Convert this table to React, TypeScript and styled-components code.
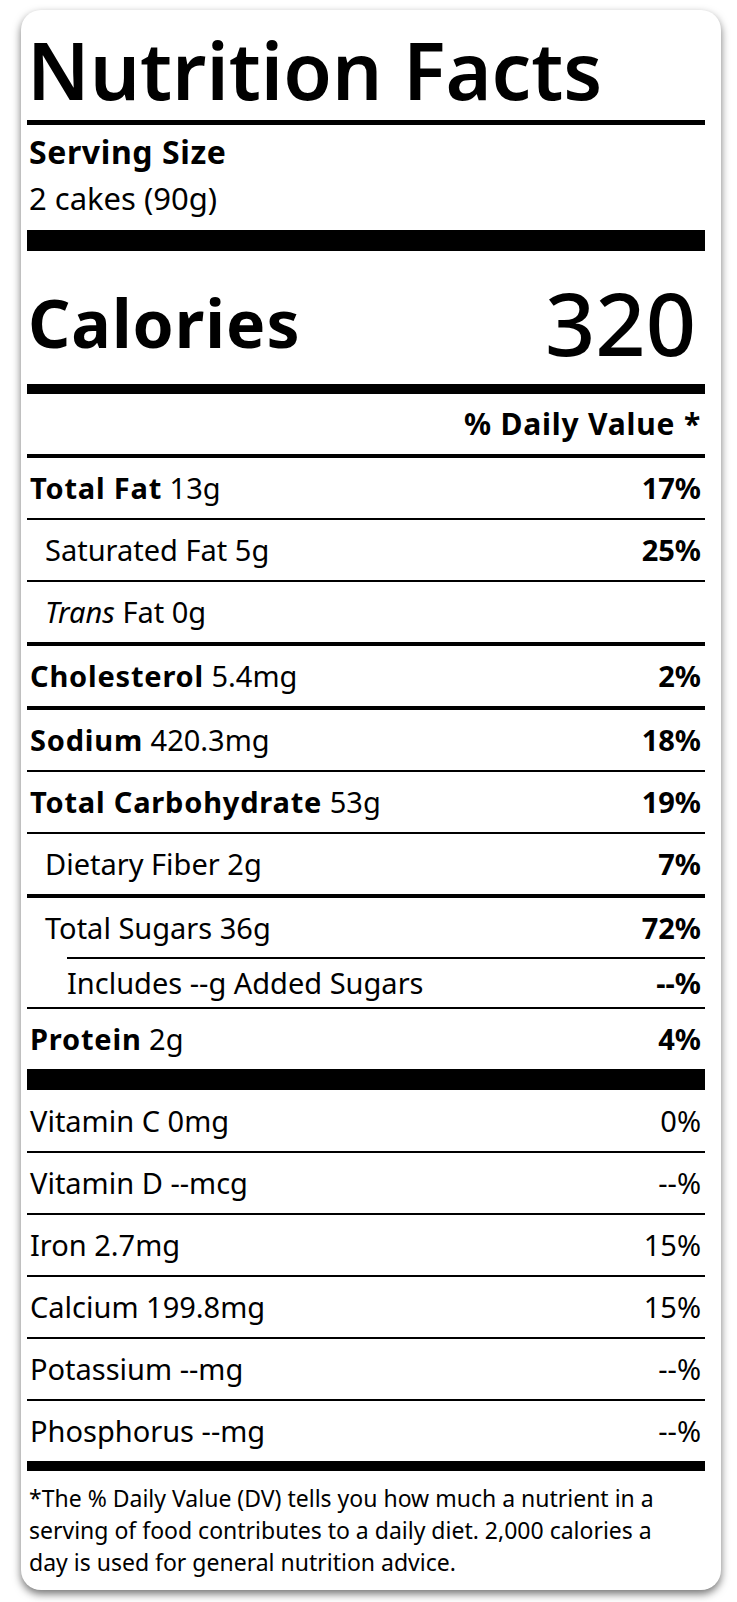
import React from 'react'
import styled, { createGlobalStyle } from 'styled-components'

const GlobalStyle = createGlobalStyle`
  html, body {
    margin: 0;
    padding: 0;
    background: #fff;
  }
  body {
    font-family: 'Noto Sans', 'Open Sans', sans-serif;
    color: #000;
  }
`

const Page = styled.div`
  padding: 10px 16px 12px 21px;
`

const Label = styled.section`
  width: 700px;
  box-sizing: border-box;
  padding: 0 16px 0 6px;
  background: #fff;
  border-radius: 20px;
  box-shadow: 0 4px 9px rgba(0, 0, 0, 0.55);
`

const Title = styled.h1`
  margin: 0;
  padding-top: 10px;
  font-size: 79px;
  line-height: 100px;
  font-weight: 600;
  white-space: nowrap;
`

const Rule = styled.div<{ $h: number; $inset?: number }>`
  height: ${({ $h }) => $h}px;
  margin-left: ${({ $inset }) => $inset || 0}px;
  background: #000;
`

const Serving = styled.div`
  padding: 4px 0 9px 2px;
  line-height: 46px;
`

const ServingTitle = styled.div`
  font-size: 32px;
  font-weight: 700;
  letter-spacing: 0.6px;
`

const ServingValue = styled.div`
  font-size: 31px;
`

const CaloriesRow = styled.div`
  display: flex;
  justify-content: space-between;
  align-items: center;
  height: 133px;
  box-sizing: border-box;
  padding: 8px 9px 0 1px;
`

const CaloriesLabel = styled.span`
  font-size: 66px;
  font-weight: 700;
  letter-spacing: 1px;
  line-height: 1;
`

const CaloriesValue = styled.span`
  font-size: 88px;
  font-weight: 500;
  line-height: 1;
`

const DailyHead = styled.div`
  text-align: right;
  padding-right: 4px;
  font-size: 30px;
  font-weight: 700;
  letter-spacing: 0.8px;
  line-height: 60px;
`

const Row = styled.div<{ $h?: number; $indent?: number }>`
  display: flex;
  justify-content: space-between;
  height: ${({ $h }) => $h || 60}px;
  line-height: ${({ $h }) => $h || 60}px;
  padding: 0 4px 0 ${({ $indent }) => ($indent === undefined ? 3 : $indent)}px;
  margin-left: ${({ $indent }) => ($indent === 0 ? 40 : 0)}px;
  font-size: 29px;
  white-space: nowrap;
`

const Strong = styled.b`
  font-weight: 700;
  letter-spacing: 0.8px;
`

const Percent = styled.span<{ $bold?: boolean }>`
  font-weight: ${({ $bold }) => ($bold ? 700 : 400)};
`

const Footnote = styled.p`
  margin: 0;
  padding: 11px 20px 12px 2px;
  font-size: 23px;
  line-height: 32px;
`

interface INutrient {
  name: React.ReactNode
  amount: string
  dv?: string
  bold?: boolean
  indent?: number
  h?: number
  rule: number
  ruleInset?: number
}

const nutrients: INutrient[] = [
  { name: 'Total Fat', amount: '13g', dv: '17%', bold: true, rule: 2 },
  { name: 'Saturated Fat', amount: '5g', dv: '25%', indent: 18, rule: 2 },
  { name: <><i>Trans</i> Fat</>, amount: '0g', indent: 18, rule: 4 },
  { name: 'Cholesterol', amount: '5.4mg', dv: '2%', bold: true, rule: 4 },
  { name: 'Sodium', amount: '420.3mg', dv: '18%', bold: true, rule: 2 },
  { name: 'Total Carbohydrate', amount: '53g', dv: '19%', bold: true, rule: 2 },
  { name: 'Dietary Fiber', amount: '2g', dv: '7%', indent: 18, rule: 4 },
  { name: 'Total Sugars', amount: '36g', dv: '72%', indent: 18, h: 59, rule: 2, ruleInset: 40 },
  { name: 'Includes --g Added Sugars', amount: '', dv: '--%', indent: 0, h: 48, rule: 2 },
  { name: 'Protein', amount: '2g', dv: '4%', bold: true, rule: 21 },
]

const vitamins = [
  { name: 'Vitamin C', amount: '0mg', dv: '0%', h: 61 },
  { name: 'Vitamin D', amount: '--mcg', dv: '--%' },
  { name: 'Iron', amount: '2.7mg', dv: '15%' },
  { name: 'Calcium', amount: '199.8mg', dv: '15%' },
  { name: 'Potassium', amount: '--mg', dv: '--%' },
  { name: 'Phosphorus', amount: '--mg', dv: '--%' },
]

const App = () => {
  return (
    <Page>
      <GlobalStyle />
      <Label>
        <Title>Nutrition Facts</Title>
        <Rule $h={5} />

        <Serving>
          <ServingTitle>Serving Size</ServingTitle>
          <ServingValue>2 cakes (90g)</ServingValue>
        </Serving>
        <Rule $h={21} />

        <CaloriesRow>
          <CaloriesLabel>Calories</CaloriesLabel>
          <CaloriesValue>320</CaloriesValue>
        </CaloriesRow>
        <Rule $h={10} />

        <DailyHead>% Daily Value *</DailyHead>
        <Rule $h={4} />

        {nutrients.map((n, i) => (
          <React.Fragment key={i}>
            <Row $h={n.h} $indent={n.indent}>
              <span>
                {n.bold ? <Strong>{n.name}</Strong> : n.name}
                {n.amount && ` ${n.amount}`}
              </span>
              {n.dv && <Percent $bold>{n.dv}</Percent>}
            </Row>
            <Rule $h={n.rule} $inset={n.ruleInset} />
          </React.Fragment>
        ))}

        {vitamins.map((v, i) => (
          <React.Fragment key={v.name}>
            <Row $h={v.h}>
              <span>
                {v.name} {v.amount}
              </span>
              <Percent>{v.dv}</Percent>
            </Row>
            <Rule $h={i === vitamins.length - 1 ? 10 : 2} />
          </React.Fragment>
        ))}

        <Footnote>
          *The % Daily Value (DV) tells you how much a nutrient in a serving of food
          contributes to a daily diet. 2,000 calories a day is used for general
          nutrition advice.
        </Footnote>
      </Label>
    </Page>
  )
}

export default App
